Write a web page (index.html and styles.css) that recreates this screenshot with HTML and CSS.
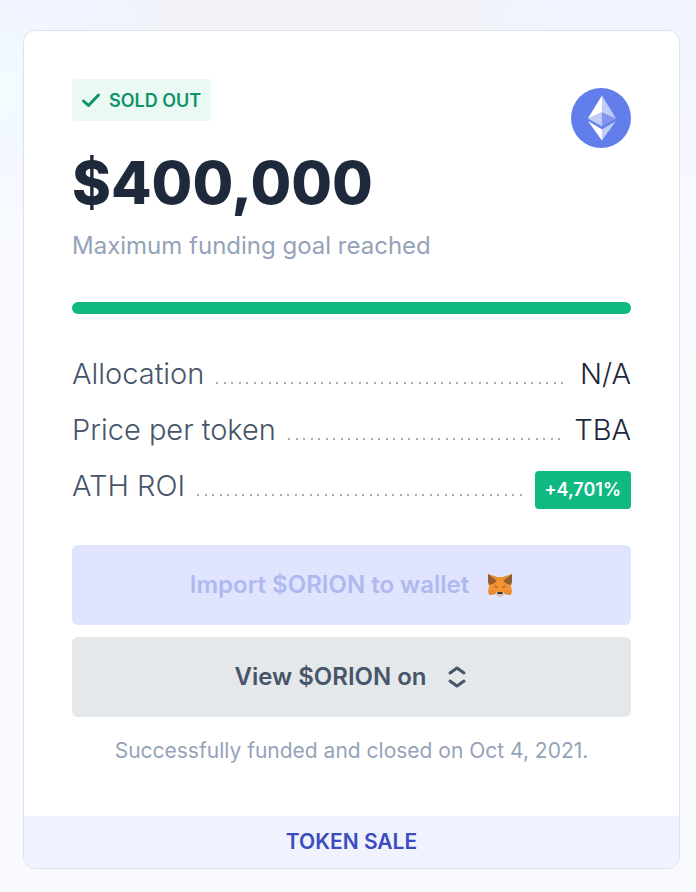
FILE: index.html
```html
<!DOCTYPE html>
<html lang="en">
<head>
<meta charset="utf-8">
<meta name="viewport" content="width=device-width, initial-scale=1">
<title>$ORION token sale</title>
<link rel="stylesheet" href="styles.css">
</head>
<body>
<main class="card">
  <div class="content">
    <header class="head">
      <div>
        <span class="status">
          <svg class="check" viewBox="0 0 20 16" aria-hidden="true"><path d="M2.5 9l5 4.5L17.500 3"/></svg>
          SOLD OUT
        </span>
        <h1 class="amount">$400,000</h1>
        <p class="goal">Maximum funding goal reached</p>
      </div>
      <svg class="chain" viewBox="0 0 32 32" role="img" aria-label="Ethereum">
        <circle cx="16" cy="16" r="16" fill="#627eea"/>
        <g fill="#fff">
          <path fill-opacity=".602" d="M16.498 4v8.870l7.497 3.350z"/>
          <path d="M16.498 4L9 16.220l7.498-3.350z"/>
          <path fill-opacity=".602" d="M16.498 21.968v6.027L24 17.616z"/>
          <path d="M16.498 27.995v-6.028L9 17.616z"/>
          <path fill-opacity=".2" d="M16.498 20.573l7.497-4.353-7.497-3.348z"/>
          <path fill-opacity=".602" d="M9 16.220l7.498 4.353v-7.701z"/>
        </g>
      </svg>
    </header>
    <div class="progress" role="progressbar" aria-label="Funding" aria-valuenow="100" aria-valuemin="0" aria-valuemax="100"></div>
    <dl class="facts">
      <div class="fact"><dt>Allocation</dt><dd>N/A</dd></div>
      <div class="fact"><dt>Price per token</dt><dd>TBA</dd></div>
      <div class="fact"><dt>ATH ROI</dt><dd><span class="roi">+4,701%</span></dd></div>
    </dl>
    <div class="actions">
      <button class="button import" type="button" disabled>
        Import $ORION to wallet
        <svg class="fox" viewBox="0 0 26 24" aria-hidden="true">
          <path fill="#f29430" d="M1 1l8 3h8l8-3v8l-1 4 1 5-2 4-6-1-3 2h-2l-3-2-6 1-2-4 1-5-1-4z"/>
          <path fill="#925e30" d="M1 1l9 6-2 3-6 2-1-4zM25 1l-9 6 2 3 6 2 1-4z"/>
          <path fill="#e88a38" d="M1 1l9 3v4zM25 1l-9 3v4zM8 9l2 6-5-1zM18 9l-2 6 5-1zM1 18l7-1v4l-6 1zM25 18l-7-1v4l6 1z"/>
          <path fill="#8a5a34" d="M8 13l3 1-1 1-2-1zM18 13l-3 1 1 1 2-1z"/>
          <path fill="#d7c1b3" d="M9 19h8v3l-3 2h-2l-3-2z"/>
          <path fill="#333" d="M11 19h4l1 1-1 1h-4l-1-1z"/>
        </svg>
      </button>
      <button class="button view" type="button">
        View $ORION on
        <svg class="updown" viewBox="0 0 24 24" aria-hidden="true"><path d="M5 8l7-5 7 5M5 16l7 5 7-5"/></svg>
      </button>
    </div>
    <p class="note">Successfully funded and closed on Oct 4, 2021.</p>
  </div>
  <footer class="footer">TOKEN SALE</footer>
</main>
</body>
</html>
```
FILE: styles.css
```css
* { box-sizing: border-box; }
body {
  margin: 0;
  padding: 30px 16px 23px 23px;
  font-family: Inter, "Liberation Sans", sans-serif;
  color: #1e293b;
  background:
    radial-gradient(circle at 0 90px, #f1fcfe 0, transparent 80px),
    radial-gradient(ellipse at 320px 0, #f2f3f7 0, #f2f3f7 120px, transparent 240px),
    linear-gradient(#f0f4ff, #f8faff 260px, #f8fafd);
}
.card {
  border: 1px solid #dfe2ea;
  border-radius: 12px;
  background: #fff;
  overflow: hidden;
}
.content { padding: 48px 48px 49px; }
.head {
  display: flex;
  justify-content: space-between;
  align-items: flex-start;
}
.status {
  display: inline-flex;
  align-items: center;
  gap: 8px;
  height: 42px;
  padding: 0 10px 0 9px;
  border-radius: 4px;
  background: #eaf9f4;
  color: #0e9467;
  font-size: 18px;
  font-weight: 600;
}
.check { width: 20px; height: 16px; }
.check path, .updown path {
  fill: none;
  stroke: currentColor;
  stroke-width: 3;
  stroke-linecap: round;
  stroke-linejoin: round;
}
.amount {
  margin: 32px 0 0;
  font-size: 59px;
  line-height: 60px;
  font-weight: 800;
}
.goal {
  margin: 15px 0 0;
  font-size: 24px;
  line-height: 36px;
  color: #94a3b8;
}
.chain { width: 60px; height: 60px; margin-top: 9px; }
.progress {
  height: 12px;
  margin-top: 38px;
  border-radius: 6px;
  background: #10b981;
}
.facts {
  display: grid;
  gap: 12px;
  margin: 38px 0 37px;
  font-size: 29px;
  line-height: 44px;
  font-weight: 300;
}
.fact { display: flex; height: 44px; }
.fact::after {
  content: "";
  order: 1;
  flex: 1;
  height: 2px;
  margin: 30px 12px 0;
  background: linear-gradient(90deg, #a3acba 2px, transparent 2px 8px, #a3acba 8px 10px, transparent 10px) 0 0 / 15px 2px repeat-x;
}
dt { color: #475569; }
dd { order: 2; margin: 0; }
.roi {
  display: block;
  height: 38px;
  margin-top: 7px;
  padding: 0 10px;
  border-radius: 4px;
  background: #10b981;
  color: #fff;
  font-size: 18px;
  line-height: 38px;
  font-weight: 600;
}
.actions { display: grid; gap: 12px; }
.button {
  display: flex;
  align-items: center;
  justify-content: center;
  gap: 18px;
  width: 100%;
  height: 80px;
  padding: 0;
  border: 0;
  border-radius: 6px;
  font: 600 24px/36px Inter, "Liberation Sans", sans-serif;
}
.import { background: #e0e4ff; color: #afb9ef; }
.view { background: #e4e8eb; color: #475569; }
.fox { width: 26px; height: 24px; }
.updown { width: 24px; height: 24px; }
.note {
  margin: 18px 0 0;
  font-size: 21px;
  line-height: 32px;
  text-align: center;
  color: #94a3b8;
}
.footer {
  height: 52px;
  background: #f0f2fe;
  color: #3b4cc0;
  font-size: 21px;
  line-height: 52px;
  font-weight: 600;
  text-align: center;
}
```
